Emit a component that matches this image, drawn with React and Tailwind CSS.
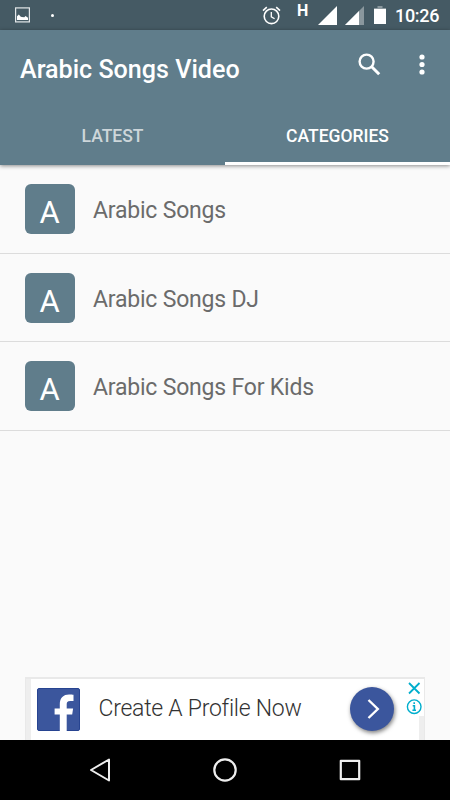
import React, { useState } from "react";

const categories = ["Arabic Songs", "Arabic Songs DJ", "Arabic Songs For Kids"];
const tabs = ["LATEST", "CATEGORIES"];

function StatusBar() {
  return (
    <div className="h-[30px] bg-[#455a64] flex items-center pl-[15px] pr-[10px] text-white">
      <svg width="15" height="16" viewBox="0 0 15 16">
        <rect x="0.6" y="0.9" width="13.8" height="14" fill="none" stroke="#e3e7e9" strokeWidth="1.2" />
        <path d="M2 13V9.2L3.8 7.6 5.5 9.4 6.7 10 9.3 10.2 10.5 9 13 10.8V13Z" fill="#fff" />
      </svg>
      <span className="w-[3px] h-[3px] rounded-full bg-white ml-[21px]" />

      <svg className="ml-auto" width="19" height="19" viewBox="0 0 19 19" fill="none" stroke="#fff">
        <circle cx="9.5" cy="10.3" r="7.3" strokeWidth="1.6" />
        <path d="M9.3 6V10.8L12.6 12.8" strokeWidth="1.3" />
        <path d="M1 4.6L4.8 1.2M18 4.6L14.2 1.2" strokeWidth="1.6" />
      </svg>
      <span className="w-3 ml-[16px] mb-[8px] text-[16px] leading-[16px] font-bold">H</span>
      <svg className="ml-[9px]" width="19" height="19" viewBox="0 0 19 19">
        <path d="M0 19L19 0V19Z" fill="#fff" />
      </svg>
      <svg className="ml-[8px]" width="19" height="19" viewBox="0 0 19 19">
        <path d="M0 19L19 0V19Z" fill="#8a979d" />
        <path d="M0 19L14 5V19Z" fill="#fff" />
      </svg>
      <svg className="ml-[10px]" width="12" height="18" viewBox="0 0 12 18">
        <path d="M3.5 0H8.5V2H12V4H0V2H3.5Z" fill="#8a979d" />
        <path d="M0 3H12V18H0Z" fill="#fff" />
      </svg>
      <span className="ml-[9px] w-[45px] pt-[1px] text-[18px] leading-[20px] font-medium tracking-[-0.3px] whitespace-nowrap">
        10:26
      </span>
    </div>
  );
}

function Header({ active, onChange }) {
  return (
    <header className="relative h-[135px] bg-[#607d8b] text-white flex flex-col shadow-[0_1px_4px_rgba(0,0,0,0.45)]">
      <div className="h-[77px] flex items-center pl-5 pr-[25px]">
        <h1 className="pt-[2px] text-[25.1px] leading-[30px] font-medium whitespace-nowrap">Arabic Songs Video</h1>
        <button className="ml-auto mb-[8px]">
          <svg width="23" height="23" viewBox="0 0 23 23" fill="none" stroke="#fff">
            <circle cx="8.6" cy="8.6" r="7" strokeWidth="2.4" />
            <path d="M13.7 13.7L21.2 21.2" strokeWidth="3" />
          </svg>
        </button>
        <button className="ml-[38px] mb-[8px]">
          <svg width="6" height="21" viewBox="0 0 6 21" fill="#fff">
            <circle cx="3" cy="3" r="2.6" />
            <circle cx="3" cy="10.5" r="2.6" />
            <circle cx="3" cy="18" r="2.6" />
          </svg>
        </button>
      </div>
      <nav className="grow grid grid-cols-2">
        {tabs.map((tab) => (
          <button
            key={tab}
            onClick={() => onChange(tab)}
            className={`pt-[2px] border-b-[3px] text-[17.5px] leading-[24px] font-medium ${
              active === tab ? "border-white text-white" : "border-transparent text-white/70"
            }`}
          >
            {tab}
          </button>
        ))}
      </nav>
    </header>
  );
}

function AdBanner() {
  return (
    <div className="h-[63px] mx-[25px] border-t-2 border-x border-[#e9e9e9] bg-white flex">
      <div className="w-[5px] bg-[#eeeeee]" />
      <div className="grow flex items-start pl-[6px] pt-[8px]">
        <svg className="mt-[0.5px]" width="43" height="43" viewBox="0 0 43 43">
          <rect x="0.5" y="0.5" width="42" height="42" rx="1.5" fill="#3b569d" stroke="#274491" />
          <path
            d="M22.8 43V26.5H17.6V20.5H22.8V16.2C22.8 9.7 26.5 6.4 32 6.4C34 6.4 35.6 6.5 36.5 6.7V13H33.2C30.3 13 29.7 14.3 29.7 16.6V20.5H36.1L35.2 26.5H29.7V43Z"
            fill="#fff"
          />
        </svg>
        <span className="ml-[18.5px] mt-[7px] text-[23px] leading-[30px] font-light tracking-[-0.26px] text-[#333] whitespace-nowrap">
          Create A Profile Now
        </span>
        <button className="ml-auto mr-[30px] w-11 h-11 rounded-full bg-[#3b569d] flex items-center justify-center shadow-[1px_2px_4px_rgba(0,0,0,0.5)]">
          <svg className="ml-[2px]" width="13" height="20" viewBox="0 0 13 20" fill="none" stroke="#fff" strokeWidth="2.4">
            <path d="M1.5 1L10.8 10L1.5 19" />
          </svg>
        </button>
      </div>
      {/* ad controls sit over the frame edge */}
      <div className="relative w-0">
        <div className="absolute right-0 bottom-0 w-[5px] h-[24px] bg-[#eeeeee]" />
        <svg className="absolute right-[1px] top-[2px]" width="18" height="37" viewBox="0 0 18 37" fill="none" stroke="#00aecd">
          <path d="M4 2L14.5 12.5M14.5 2L4 12.5" strokeWidth="1.8" />
          <circle cx="9.2" cy="25.7" r="6.8" strokeWidth="1.4" />
          <path d="M9.2 21.3V23.1M7.7 24.8H9.4V29M7.4 29.3H11" strokeWidth="1.6" />
        </svg>
      </div>
    </div>
  );
}

function NavBar() {
  return (
    <div className="h-[60px] bg-black flex items-center justify-between px-[88px]">
      <svg width="24" height="26" viewBox="0 0 24 26" fill="none" stroke="#eee" strokeWidth="2" strokeLinejoin="round">
        <path d="M21 2.5V23.5L3 13Z" />
      </svg>
      <svg width="24" height="24" viewBox="0 0 24 24" fill="none" stroke="#eee" strokeWidth="2.2">
        <circle cx="12" cy="12" r="10.7" />
      </svg>
      <svg width="24" height="24" viewBox="0 0 24 24" fill="none" stroke="#eee" strokeWidth="2.2" strokeLinejoin="round">
        <rect x="2.8" y="2.8" width="18.4" height="18.4" />
      </svg>
    </div>
  );
}

function App() {
  const [activeTab, setActiveTab] = useState("CATEGORIES");

  return (
    <div className="w-[450px] h-[800px] overflow-hidden bg-[#fafafa] flex flex-col font-['Roboto',sans-serif]">
      <StatusBar />
      <Header active={activeTab} onChange={setActiveTab} />

      <ul className="grow">
        {categories.map((name) => (
          <li key={name} className="h-[88.7px] border-b-[1.5px] border-[#dcdcdc] flex items-center pl-[24.5px]">
            <div className="w-[50px] h-[50px] rounded-[6px] bg-[#607d8b] text-white text-[31px] leading-[36px] flex items-center justify-center pt-[8px]">
              A
            </div>
            <span className="ml-[18.5px] pt-[4px] text-[23px] leading-[30px] tracking-[-0.2px] text-[#6b6b6b] whitespace-nowrap">
              {name}
            </span>
          </li>
        ))}
      </ul>

      <AdBanner />
      <NavBar />
    </div>
  );
}

export default App;
